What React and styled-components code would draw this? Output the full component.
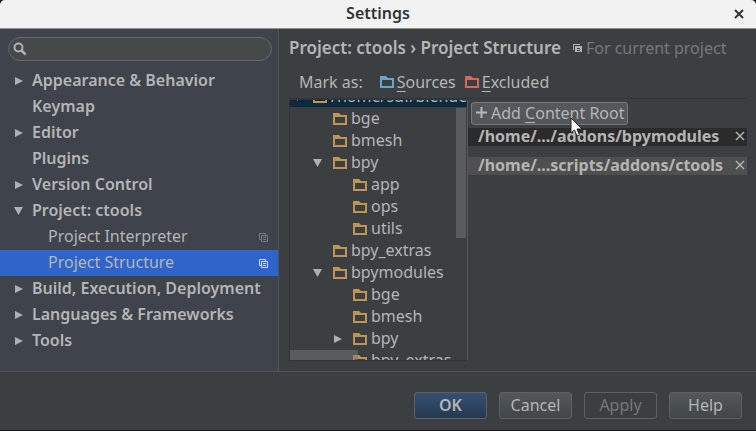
import React from "react";
import styled, { createGlobalStyle, css } from "styled-components";

const GlobalStyle = createGlobalStyle`
  * { box-sizing: border-box; }
  body { margin: 0; background: #16181a; }
  button, input { font: inherit; color: inherit; }
  button { margin: 0; padding: 0; border: 0; background: none; white-space: nowrap; }
  ul { margin: 0; padding: 0; list-style: none; }
  svg { display: block; flex: none; }
`;

const Dialog = styled.div`
  display: flex;
  flex-direction: column;
  min-height: 100vh;
  overflow: hidden;
  border-bottom: 1px solid #16181a;
  border-radius: 5px 5px 0 0;
  background: #3c3f41;
  color: #b5b5b5;
  font: 16px/22px "Noto Sans", sans-serif;
`;

const TitleBar = styled.header`
  display: grid;
  grid-template-columns: 34px 1fr 34px;
  align-items: center;
  height: 29px;
  border-bottom: 1px solid #8f9391;
  background: #f2f2f2;
  color: #2e3436;
`;

const Title = styled.h1`
  grid-column: 2;
  margin: 0;
  padding-bottom: 2px;
  font-size: 16px;
  font-weight: 600;
  text-align: center;
`;

const CloseButton = styled.button`
  display: flex;
  justify-content: center;
`;

const Body = styled.div`
  display: flex;
  flex: 1;
`;

const Sidebar = styled.nav`
  flex: none;
  width: 279px;
  border-right: 1px solid #515456;
  background: #3e434c;
`;

const SearchBox = styled.label`
  display: flex;
  align-items: center;
  gap: 6px;
  height: 24px;
  margin: 8px 6px 7px 8px;
  padding: 0 12px 0 4px;
  border: 1px solid #646869;
  border-radius: 12px;
  background: #45494a;
`;

const SearchInput = styled.input`
  flex: 1;
  min-width: 0;
  padding: 0;
  border: 0;
  outline: 0;
  background: transparent;
`;

const Category = styled.button`
  display: flex;
  align-items: center;
  width: 100%;
  height: 26px;
  padding: 0 10px 2px ${(p) => (p.$child ? 48 : 14)}px;
  font-weight: ${(p) => (p.$child ? 400 : 600)};
  text-align: left;
  background: ${(p) => (p.$selected ? "#2f65ca" : "transparent")};
`;

const Grow = styled.span`
  flex: 1;
`;

const ArrowSlot = styled.span`
  display: flex;
  flex: none;
  width: ${(p) => p.$width}px;
  padding-top: 2px;
`;

const CopySlot = styled.span`
  padding-top: 2px;
`;

const Main = styled.main`
  display: flex;
  flex: 1;
  flex-direction: column;
  min-width: 0;
  padding: 8px 9px 10px 10px;
`;

const Heading = styled.div`
  display: flex;
  align-items: center;
  white-space: nowrap;
`;

const Crumbs = styled.h2`
  margin: 0 12px 0 0;
  font-size: 17px;
  font-weight: 600;
`;

const Scope = styled.span`
  display: flex;
  align-items: center;
  gap: 4px;
  color: #777777;
`;

const MarkBar = styled.div`
  display: flex;
  align-items: center;
  gap: 9px;
  padding: 12px 10px 5px;
`;

const MarkLabel = styled.span`
  margin-right: 8px;
`;

const MarkButton = styled.button`
  display: flex;
  align-items: center;
  gap: 3px;
`;

const Key = styled.span`
  text-decoration: underline;
  text-decoration-thickness: 1px;
  text-underline-offset: 3px;
`;

const Panes = styled.div`
  display: grid;
  flex: 1;
  grid-template-columns: 179px 1fr;
  border-top: 1px solid #323435;
`;

const TreePane = styled.div`
  position: relative;
  height: 262px;
  overflow: hidden;
  border: 1px solid #323435;
  border-right-color: #55585a;
`;

const TreeList = styled.ul`
  margin-top: -15px;
`;

const TreeRow = styled.li`
  display: flex;
  align-items: center;
  height: 22px;
  padding-left: ${(p) => 3 + p.$depth * 20}px;
  white-space: nowrap;
  background: ${(p) => (p.$selected ? "#0d293e" : "transparent")};
`;

const FolderSlot = styled.span`
  margin-right: 4px;
  padding-top: 2px;
`;

const thumb = css`
  position: absolute;
  background: rgba(120, 120, 120, 0.5);
`;

const VerticalThumb = styled.div`
  ${thumb}
  top: 8px;
  right: 1px;
  width: 10px;
  height: 130px;
`;

const HorizontalThumb = styled.div`
  ${thumb}
  bottom: 0;
  left: 0;
  width: 68px;
  height: 10px;
`;

const RootsPane = styled.section`
  min-width: 0;
  padding-top: 3px;
`;

const AddButton = styled.button`
  position: relative;
  display: flex;
  align-items: center;
  gap: 4px;
  height: 23px;
  margin: 0 3px;
  padding: 0 3px 2px 4px;
  border: 1px solid #777a7b;
  border-radius: 3px;
  background: #55585a;
`;

const Pointer = styled.svg`
  position: absolute;
  top: 14px;
  left: 98px;
  z-index: 1;
`;

const RootRow = styled.div`
  display: flex;
  align-items: center;
  justify-content: space-between;
  height: 18px;
  margin: 3px 0 11px;
  padding: 0 2px 2px 10px;
  font-weight: 700;
  white-space: nowrap;
  background: ${(p) => (p.$selected ? "#4f4f4f" : "#2b2b2b")};
`;

const Footer = styled.footer`
  display: flex;
  justify-content: flex-end;
  gap: 12px;
  padding: 20px 14px 11px;
  border-top: 1px solid #515456;
`;

const ActionButton = styled.button`
  width: 73px;
  height: 27px;
  padding-bottom: 2px;
  border: 1px solid #5e6162;
  border-radius: 3px;
  background: linear-gradient(#535759, #414648);
  ${(p) =>
    p.$primary &&
    css`
      background: linear-gradient(#365072, #263850);
      font-weight: 600;
    `}
  &:disabled {
    background: transparent;
    color: #777777;
  }
`;

const Arrow = ({ open }) => (
  <svg width="10" height="10" viewBox="0 0 10 10" aria-hidden="true">
    <path d={open ? "M0 1h9L4.500 9z" : "M1 1v8l8-4z"} fill="#b0b0b0" />
  </svg>
);

const Folder = ({ color = "#c09553" }) => (
  <svg width="14" height="12" viewBox="0 0 14 12" aria-hidden="true">
    <path fill={color} fillRule="evenodd" d="M0 0h6l2 2h6v10H0zM2 4v6h10V4z" />
  </svg>
);

const CopyIcon = ({ color }) => (
  <svg width="9" height="9" viewBox="0 0 9 9" fill="none" stroke={color} aria-hidden="true">
    <path d="M2 6.500H.5v-6h6V2M2.500 2.500h6v6h-6zM4 4.500h3M4 6.500h3" />
  </svg>
);

const ScopeIcon = () => (
  <svg width="9" height="8" viewBox="0 0 9 8" aria-hidden="true">
    <path d="M0 0h7v1H1v5H0z" fill="#afb1b3" />
    <path fillRule="evenodd" d="M2 2h7v6H2zM4 4v1h3V4zM4 6v1h3V6z" fill="#afb1b3" />
  </svg>
);

const Cross = ({ color, width }) => (
  <svg width="10" height="10" viewBox="0 0 10 10" aria-hidden="true">
    <path d="M1 1l8 8M9 1L1 9" stroke={color} strokeWidth={width} />
  </svg>
);

const categories = [
  { name: "Appearance & Behavior", open: false },
  { name: "Keymap" },
  { name: "Editor", open: false },
  { name: "Plugins" },
  { name: "Version Control", open: false },
  { name: "Project: ctools", open: true },
  { name: "Project Interpreter", child: true },
  { name: "Project Structure", child: true, selected: true },
  { name: "Build, Execution, Deployment", open: false },
  { name: "Languages & Frameworks", open: false },
  { name: "Tools", open: false },
];

const folders = [
  { name: "/home/sdf/blender", depth: 0, open: true, selected: true },
  { name: "bge", depth: 1 },
  { name: "bmesh", depth: 1 },
  { name: "bpy", depth: 1, open: true },
  { name: "app", depth: 2 },
  { name: "ops", depth: 2 },
  { name: "utils", depth: 2 },
  { name: "bpy_extras", depth: 1 },
  { name: "bpymodules", depth: 1, open: true },
  { name: "bge", depth: 2 },
  { name: "bmesh", depth: 2 },
  { name: "bpy", depth: 2, open: false },
  { name: "bpy_extras", depth: 2 },
];

export default function App() {
  return (
    <>
      <GlobalStyle />
      <Dialog>
        <TitleBar>
          <Title>Settings</Title>
          <CloseButton aria-label="Close">
            <Cross color="#2e3436" width={2} />
          </CloseButton>
        </TitleBar>
        <Body>
          <Sidebar>
            <SearchBox>
              <svg width="14" height="14" viewBox="0 0 14 14" fill="none" stroke="#afb1b3" aria-hidden="true">
                <circle cx="5.500" cy="5.500" r="4" strokeWidth="2" />
                <path d="M8.500 8.500l4 4" strokeWidth="2.500" />
              </svg>
              <SearchInput type="text" aria-label="Search settings" />
            </SearchBox>
            {categories.map((c) => (
              <Category key={c.name} $child={c.child} $selected={c.selected}>
                {!c.child && (
                  <ArrowSlot $width={18}>{c.open !== undefined && <Arrow open={c.open} />}</ArrowSlot>
                )}
                <Grow>{c.name}</Grow>
                {c.child && (
                  <CopySlot><CopyIcon color={c.selected ? "#d0dcf5" : "#777b80"} /></CopySlot>
                )}
              </Category>
            ))}
          </Sidebar>
          <Main>
            <Heading>
              <Crumbs>Project: ctools › Project Structure</Crumbs>
              <Scope>
                <ScopeIcon />
                For current project
              </Scope>
            </Heading>
            <MarkBar>
              <MarkLabel>Mark as:</MarkLabel>
              <MarkButton>
                <Folder color="#6ba6c9" />
                <span><Key>S</Key>ources</span>
              </MarkButton>
              <MarkButton>
                <Folder color="#d06b62" />
                <span><Key>E</Key>xcluded</span>
              </MarkButton>
            </MarkBar>
            <Panes>
              <TreePane>
                <TreeList>
                  {folders.map((f, i) => (
                    <TreeRow key={i} $depth={f.depth} $selected={f.selected}>
                      <ArrowSlot $width={20}>{f.open !== undefined && <Arrow open={f.open} />}</ArrowSlot>
                      <FolderSlot><Folder /></FolderSlot>
                      {f.name}
                    </TreeRow>
                  ))}
                </TreeList>
                <VerticalThumb />
                <HorizontalThumb />
              </TreePane>
              <RootsPane>
                <AddButton>
                  <svg width="11" height="11" viewBox="0 0 11 11" aria-hidden="true">
                    <path d="M5.500 0v11M0 5.500h11" stroke="#b8b8b8" strokeWidth="2" />
                  </svg>
                  <span>Add <Key>C</Key>ontent Root</span>
                  <Pointer width="13" height="20" viewBox="0 0 13 20" aria-hidden="true">
                    <path d="M1 1v15l3.500-3 2.500 6 2.500-1-2.500-6h5z" fill="#fff" stroke="#222" />
                  </Pointer>
                </AddButton>
                <RootRow>
                  /home/.../addons/bpymodules
                  <button aria-label="Remove bpymodules"><Cross color="#b0b0b0" width={1.5} /></button>
                </RootRow>
                <RootRow $selected>
                  /home/...scripts/addons/ctools
                  <button aria-label="Remove ctools"><Cross color="#b0b0b0" width={1.5} /></button>
                </RootRow>
              </RootsPane>
            </Panes>
          </Main>
        </Body>
        <Footer>
          <ActionButton $primary>OK</ActionButton>
          <ActionButton>Cancel</ActionButton>
          <ActionButton disabled>Apply</ActionButton>
          <ActionButton>Help</ActionButton>
        </Footer>
      </Dialog>
    </>
  );
}
